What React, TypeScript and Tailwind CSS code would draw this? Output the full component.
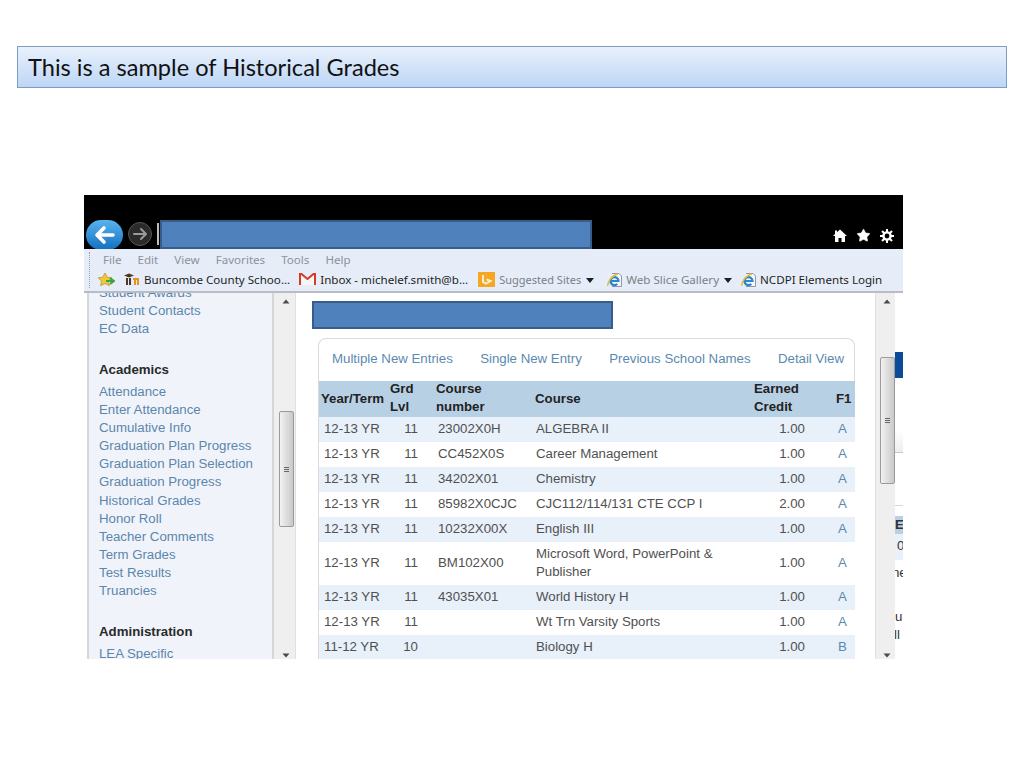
import { Star } from 'lucide-react'

const sans = 'font-["Liberation_Sans",Arial,sans-serif]'

const academics = [
  'Attendance',
  'Enter Attendance',
  'Cumulative Info',
  'Graduation Plan Progress',
  'Graduation Plan Selection',
  'Graduation Progress',
  'Historical Grades',
  'Honor Roll',
  'Teacher Comments',
  'Term Grades',
  'Test Results',
  'Truancies',
]

const grades = [
  { term: '12-13 YR', lvl: '11', num: '23002X0H', course: 'ALGEBRA II', credit: '1.00', f1: 'A' },
  { term: '12-13 YR', lvl: '11', num: 'CC452X0S', course: 'Career Management', credit: '1.00', f1: 'A' },
  { term: '12-13 YR', lvl: '11', num: '34202X01', course: 'Chemistry', credit: '1.00', f1: 'A' },
  { term: '12-13 YR', lvl: '11', num: '85982X0CJC', course: 'CJC112/114/131 CTE CCP I', credit: '2.00', f1: 'A' },
  { term: '12-13 YR', lvl: '11', num: '10232X00X', course: 'English III', credit: '1.00', f1: 'A' },
  { term: '12-13 YR', lvl: '11', num: 'BM102X00', course: 'Microsoft Word, PowerPoint & Publisher', credit: '1.00', f1: 'A' },
  { term: '12-13 YR', lvl: '11', num: '43035X01', course: 'World History H', credit: '1.00', f1: 'A' },
  { term: '12-13 YR', lvl: '11', num: '', course: 'Wt Trn Varsity Sports', credit: '1.00', f1: 'A' },
  { term: '11-12 YR', lvl: '10', num: '', course: 'Biology H', credit: '1.00', f1: 'B' },
]

function IeIcon() {
  return (
    <svg width="17" height="16" viewBox="0 0 17 16" className="shrink-0">
      <path d="M6 1.500h7l2.500 2.500v10.500H6" fill="#f7f7f7" stroke="#8d99a8" />
      <path d="M4.500 9h8a4 4 0 1 0-1.200 3" fill="none" stroke="#2a86d0" strokeWidth="2.200" />
      <path d="M1.500 14C2 9 6 3 12 2" fill="none" stroke="#e5bd3c" strokeWidth="1.400" />
    </svg>
  )
}

function BarText({ children, dim }: { children: string; dim?: boolean }) {
  return <span className={dim ? 'text-[#7b8087]' : 'text-[#1d1f24]'}>{children}</span>
}

function DropArrow() {
  return (
    <svg width="8" height="5" viewBox="0 0 8 5" className="mt-[1px] ml-[5px] shrink-0">
      <path d="M0 0h8L4 5z" fill="#1d1f24" />
    </svg>
  )
}

function ScrollArrow({ up }: { up?: boolean }) {
  return (
    <svg width="8" height="5" viewBox="0 0 8 5" className="shrink-0">
      <path d={up ? 'M4 0.5 7.5 4.5H.5z' : 'M4 4.5 7.5.5H.5z'} fill="#4a4a4a" />
    </svg>
  )
}

function Thumb({ className }: { className: string }) {
  return (
    <div className={`flex w-[15px] items-center justify-center rounded-[2px] border border-[#9b9b9b] bg-gradient-to-r from-[#f2f2f2] to-[#c9c9c9] ${className}`}>
      <div className="flex w-[5px] flex-col gap-[1px]">
        <div className="h-px bg-[#666]" />
        <div className="h-px bg-[#666]" />
        <div className="h-px bg-[#666]" />
      </div>
    </div>
  )
}

function Sidebar() {
  return (
    <div className={`ml-[3px] h-full w-[187px] shrink-0 overflow-hidden border-x-2 border-x-[#d3d6da] bg-[#f0f4fa] pl-[10px] text-[13.25px] leading-[18px] text-[#5b86ad] ${sans}`}>
      <div className="-mt-[9px]">Student Awards</div>
      <div>Student Contacts</div>
      <div>EC Data</div>
      <div className="mt-[23px] mb-[4px] font-bold text-[#2a2a2a]">Academics</div>
      <div className="leading-[18.1px]">
        {academics.map((a) => (
          <div key={a}>{a}</div>
        ))}
      </div>
      <div className="mt-[23px] mb-[4px] font-bold text-[#2a2a2a]">Administration</div>
      <div>LEA Specific</div>
    </div>
  )
}

function GradesTable() {
  return (
    <div className={`mt-[9px] ml-[22px] w-[537px] rounded-t-[8px] border border-b-0 border-[#d9dcdf] text-[13.25px] leading-[18px] text-[#505050] ${sans}`}>
      <div className="flex h-[42px] items-center justify-between pr-[10px] pb-[3px] pl-[13px] text-[#5b8ab0]">
        <span>Multiple New Entries</span>
        <span>Single New Entry</span>
        <span>Previous School Names</span>
        <span>Detail View</span>
      </div>
      <table className="w-full table-fixed border-collapse">
        <colgroup>
          <col className="w-[68px]" />
          <col className="w-[47px]" />
          <col className="w-[99px]" />
          <col className="w-[219px]" />
          <col className="w-[81px]" />
          <col className="w-[22px]" />
        </colgroup>
        <thead>
          <tr className="h-[36px] bg-[#b8d0e4] text-left font-bold text-[#222]">
            <th className="pl-[2px]">Year/Term</th>
            <th className="pl-[3px] font-bold"><span className="block -translate-y-px">Grd Lvl</span></th>
            <th className="pr-[30px] pl-[2px]"><span className="block -translate-y-px">Course number</span></th>
            <th className="pl-[2px]">Course</th>
            <th className="pl-[2px]"><span className="block -translate-y-px">Earned Credit</span></th>
            <th className="pl-[3px]">F1</th>
          </tr>
        </thead>
        <tbody>
          {grades.map((g, i) => (
            <tr key={g.course} className={`${g.course.length > 30 ? 'h-[43px]' : 'h-[25px]'} ${i % 2 === 0 ? 'bg-[#e8f0fa]' : 'bg-white'}`}>
              <td className="pb-[2px] pl-[5px]">{g.term}</td>
              <td className="pr-[16px] pb-[2px] text-right">{g.lvl}</td>
              <td className="pb-[2px] pl-[4px]">{g.num}</td>
              <td className="pr-[25px] pb-[2px] pl-[3px]">{g.course}</td>
              <td className="pr-[28px] pb-[2px] text-right">{g.credit}</td>
              <td className="pb-[2px] pl-[5px] text-[#5b8ab0]">{g.f1}</td>
            </tr>
          ))}
        </tbody>
      </table>
    </div>
  )
}

function RightStrip() {
  return (
    <div className={`h-full w-[8px] shrink-0 overflow-hidden text-[13.25px] leading-[18px] text-[#333] ${sans}`}>
      <div className="mt-[59px] h-[26px] bg-[#0b4a98]" />
      <div className="h-[75px] border-b border-[#c9c9c9] bg-gradient-to-b from-white from-70% to-[#eeeeee]" />
      <div className="h-[53px] border-b border-[#d8d8d8]" />
      <div className="mt-[10px] h-[18px] bg-[#b8d0e4] font-bold">E</div>
      <div className="h-[26px] bg-[#e8f0fa] pl-[2px] leading-[24px]">0</div>
      <div className="-ml-[3px] mt-[4px] whitespace-nowrap">ne</div>
      <div className="mt-[26px] whitespace-nowrap">u</div>
      <div className="-ml-[1px] whitespace-nowrap">ll</div>
    </div>
  )
}

export default function App() {
  return (
    <div className="h-[768px] w-[1024px] overflow-hidden bg-white">
      <div className='mx-[17px] mt-[46px] flex h-[42px] w-[990px] items-center border border-[#7f9dc4] bg-gradient-to-b from-[#e9f1fc] to-[#bdd6f6] pt-[2px] pl-[10px] font-["Lato","Open_Sans",sans-serif] text-[23.6px] text-[#111]'>
        This is a sample of Historical Grades
      </div>

      <div className="mt-[107px] ml-[84px] flex h-[464px] w-[819px] flex-col overflow-hidden">
        <div className="flex h-[54px] shrink-0 items-end bg-black pr-[9px] pl-[2px]">
          <div className="mb-[-1px] flex h-[30px] w-[37px] shrink-0 items-center justify-center rounded-full bg-gradient-to-b from-[#57b4ee] to-[#0f6fc0]">
            <svg width="24" height="20" viewBox="0 0 24 20">
              <path d="M11 3 4 10l7 7M5 10h15" fill="none" stroke="#fff" strokeWidth="3.6" strokeLinecap="round" strokeLinejoin="round" />
            </svg>
          </div>
          <div className="mb-[3px] ml-[5px] flex h-[24px] w-[24px] shrink-0 items-center justify-center rounded-full border border-[#555] bg-[#2b2b2b]">
            <svg width="16" height="14" viewBox="0 0 16 14">
              <path d="M9 2l5 5-5 5M13 7H2" fill="none" stroke="#9a9a9a" strokeWidth="2" strokeLinecap="round" strokeLinejoin="round" />
            </svg>
          </div>
          <div className="mb-[4px] ml-[5px] h-[22px] w-[2px] bg-[#bdbdbd]" />
          <div className="ml-[1px] h-[29px] w-[432px] border-2 border-[#385d8a] bg-[#4f81bd]" />
          <div className="ml-auto mb-[6px] flex items-center gap-[9px] text-white">
            <svg width="14" height="13" viewBox="0 0 14 13">
              <path d="M7 .5 14 7h-2v6H8.500V9h-3v4H2V7H0l2-1.900V1.500h2v1.700z" fill="#fff" />
            </svg>
            <Star size={15} fill="#fff" strokeWidth={1} />
            <svg width="14" height="14" viewBox="0 0 14 14">
              <circle cx="7" cy="7" r="3.600" fill="none" stroke="#fff" strokeWidth="2.400" />
              <path d="M7 0v3M7 11v3M0 7h3M11 7h3M2 2l2 2M10 10l2 2M12 2l-2 2M4 10l-2 2" stroke="#fff" strokeWidth="2" />
            </svg>
          </div>
        </div>

        <div className='relative flex h-[44px] shrink-0 flex-col border-b-2 border-[#b9bdc2] bg-[#e6edf8] pl-[19px] font-["Noto_Sans","Open_Sans",sans-serif] text-[11.6px] leading-[15px]'>
          <div className="absolute top-[3px] left-[5px] h-[36px] border-l border-dotted border-[#9aa0a8]" />
          <div className="mt-[2px] flex h-[17px] items-center gap-[16px] text-[#8d9299]">
            <span>File</span>
            <span>Edit</span>
            <span>View</span>
            <span>Favorites</span>
            <span>Tools</span>
            <span>Help</span>
          </div>
          <div className="-ml-[5px] mt-[3px] flex h-[17px] items-center whitespace-nowrap">
            <svg width="18" height="15" viewBox="0 0 18 15" className="mr-[9px] -ml-[1px] shrink-0">
              <path d="M8 1l2.200 4.200 4.600.7-3.300 3.200.8 4.600L8 11.500l-4.300 2.200.8-4.600L1.200 5.900l4.600-.7z" fill="#f0c93a" stroke="#b68a1e" strokeWidth=".7" />
              <path d="M9 9h8M13 6l4 3-4 3" fill="none" stroke="#3aa53a" strokeWidth="2" />
            </svg>
            <svg width="16" height="13" viewBox="0 0 16 13" className="mr-[4px] shrink-0">
              <path d="M0 2.500 5 .5l5 2-5 2zM2 5h2v7H2zM5 5h2v7H5z" fill="#4a3a22" />
              <path d="M9 5h6v7h-2V7h-1v5h-2V7H9z" fill="#e8931f" />
            </svg>
            <BarText>Buncombe County Schoo...</BarText>
            <svg width="17" height="13" viewBox="0 0 17 13" className="mr-[4px] ml-[9px] shrink-0">
              <path d="M1 12V1h1.500L8.500 6l6-5H16v11" fill="#f6f6f6" stroke="#d6382c" strokeWidth="2" />
            </svg>
            <BarText>Inbox - michelef.smith@b...</BarText>
            <div className="mr-[4px] ml-[10px] flex h-[15px] w-[17px] shrink-0 items-center justify-center bg-[#f5a623]">
              <svg width="13" height="11" viewBox="0 0 13 11">
                <path d="M3 1v7l3 1.500L10.500 7 6.500 5.500" fill="none" stroke="#fdeccb" strokeWidth="2" />
              </svg>
            </div>
            <span className="text-[11px]"><BarText dim>Suggested Sites</BarText></span>
            <DropArrow />
            <div className="mr-[3px] ml-[12px]"><IeIcon /></div>
            <BarText dim>Web Slice Gallery</BarText>
            <DropArrow />
            <div className="mr-[3px] ml-[8px]"><IeIcon /></div>
            <BarText>NCDPI Elements Login</BarText>
          </div>
        </div>

        <div className="flex min-h-0 flex-1 bg-white">
          <Sidebar />
          <div className="flex h-full w-[22px] shrink-0 flex-col items-center border-r border-[#e0e0e0] bg-[#efefef] pt-[6px] pb-[1px] pl-[3px]">
            <ScrollArrow up />
            <Thumb className="mt-[107px] h-[116px]" />
            <div className="mt-auto"><ScrollArrow /></div>
          </div>
          <div className="h-full w-[579px] shrink-0 overflow-hidden bg-white">
            <div className="mt-[8px] ml-[16px] h-[28px] w-[301px] border-2 border-[#385d8a] bg-[#4f81bd]" />
            <GradesTable />
          </div>
          <div className="flex h-full w-[20px] shrink-0 flex-col items-center border-l border-[#e0e0e0] bg-[#efefef] pt-[6px] pb-[1px] pl-[3px]">
            <ScrollArrow up />
            <Thumb className="mt-[53px] h-[127px]" />
            <div className="mt-auto"><ScrollArrow /></div>
          </div>
          <RightStrip />
        </div>
      </div>
    </div>
  )
}
